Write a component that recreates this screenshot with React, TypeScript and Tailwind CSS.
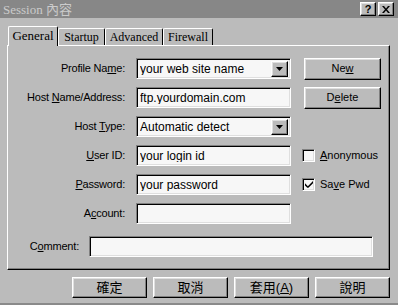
import React from "react";

const raised =
  "border border-t-white border-l-white border-r-black border-b-black shadow-[inset_-1px_-1px_0_#808080,inset_1px_1px_0_#dfdfdf] bg-[#bbbbbb]";
const sunken =
  "border border-t-[#808080] border-l-[#808080] border-r-white border-b-white shadow-[inset_1px_1px_0_#000,inset_-1px_-1px_0_#dfdfdf] bg-[#f7f7f7]";

function Field({ value, select }: { value?: string; select?: boolean }) {
  return (
    <div className={`${sunken} w-[155px] h-[21px] flex items-center pl-[3px] pr-[2px]`}>
      <span className="flex-1 text-[12px] text-black leading-none whitespace-nowrap overflow-hidden">{value}</span>
      {select && (
        <div className={`${raised} w-[17px] h-[16px] flex items-center justify-center`}>
          <svg width="7" height="4" viewBox="0 0 7 4">
            <path d="M0 0h7L3.5 4z" fill="#000" />
          </svg>
        </div>
      )}
    </div>
  );
}

function Row({ label, children, right }: { label: React.ReactNode; children: React.ReactNode; right?: React.ReactNode }) {
  return (
    <div className="flex items-center h-[21px]">
      <div className="w-[117px] text-right text-[11px] tracking-[-0.2px] text-black whitespace-nowrap">{label}</div>
      <div className="ml-[11px]">{children}</div>
      {right}
    </div>
  );
}

function Check({ checked, children }: { checked?: boolean; children: React.ReactNode }) {
  return (
    <div className="ml-[11px] flex items-center gap-[5px] text-[11px] text-black">
      <div className={`${sunken} w-[13px] h-[13px] flex items-center justify-center`}>
        {checked && (
          <svg width="8" height="8" viewBox="0 0 7 7">
            <path d="M0 2v2l2 2h1l4-4V0L2.5 4.5z" fill="#000" />
          </svg>
        )}
      </div>
      <span>{children}</span>
    </div>
  );
}

export default function App() {
  return (
    <div className="w-[398px] h-[305px] bg-[#bbbbbb] flex flex-col overflow-hidden border-b-2 border-b-[#8a8a8a] font-['Liberation_Sans','Noto_Sans_CJK_TC',sans-serif]">
      <div className="h-[18px] bg-[#878787] flex items-center pl-[3px] pr-[4px]">
        <span className="text-[13px] text-[#cbcbcb] font-['Liberation_Serif','Noto_Sans_CJK_TC',serif] leading-none">
          Session 內容
        </span>
        <div className="ml-auto flex gap-[2px]">
          <div className={`${raised} w-[16px] h-[14px] flex items-center justify-center text-[11px] font-bold leading-none`}>?</div>
          <div className={`${raised} w-[16px] h-[14px] flex items-center justify-center`}>
            <svg width="8" height="7" viewBox="0 0 8 7">
              <path d="M0 0h2l2 2.5L6 0h2L5 3.5 8 7H6L4 4.5 2 7H0l3-3.5z" fill="#000" />
            </svg>
          </div>
        </div>
      </div>

      <div className="pl-[7px] pt-[8px]">
        <div className="flex items-end h-[19px] pl-[1px] font-['Liberation_Serif',serif] text-[12px] text-black">
          <div className="relative z-10 -mb-[1px] w-[50px] h-[20px] bg-[#bbbbbb] border-l border-t border-r border-l-white border-t-white border-r-black rounded-t-[2px] flex items-center justify-center pb-[2px] text-[13px]">
            General
          </div>
          <div className="w-[47px] h-[17px] border-l border-t border-r border-l-white border-t-white border-r-black rounded-t-[2px] flex items-center justify-center">
            Startup
          </div>
          <div className="w-[58px] h-[17px] border-l border-t border-r border-l-white border-t-white border-r-black rounded-t-[2px] flex items-center justify-center">
            Advanced
          </div>
          <div className="w-[50px] h-[17px] border-l border-t border-r border-l-white border-t-white border-r-black rounded-t-[2px] flex items-center justify-center">
            Firewall
          </div>
        </div>

        <div className="w-[383px] h-[225px] border border-t-white border-l-white border-r-black border-b-black shadow-[inset_-1px_-1px_0_#808080] pt-[12px] flex flex-col">
          <div className="flex flex-col gap-[8px]">
            <Row
              label={<>Profile Na<u>m</u>e:</>}
              right={
                <div className={`${raised} ml-[13px] w-[77px] h-[22px] flex items-center justify-center text-[11px]`}>
                  Ne<u>w</u>
                </div>
              }
            >
              <Field value="your web site name" select />
            </Row>
            <Row
              label={<>Host <u>N</u>ame/Address:</>}
              right={
                <div className={`${raised} ml-[13px] w-[77px] h-[22px] flex items-center justify-center text-[11px]`}>
                  D<u>e</u>lete
                </div>
              }
            >
              <Field value="ftp.yourdomain.com" />
            </Row>
            <Row label={<>Host <u>T</u>ype:</>}>
              <Field value="Automatic detect" select />
            </Row>
            <Row label={<><u>U</u>ser ID:</>} right={<Check><u>A</u>nonymous</Check>}>
              <Field value="your login id" />
            </Row>
            <Row label={<><u>P</u>assword:</>} right={<Check checked>Sa<u>v</u>e Pwd</Check>}>
              <Field value="your password" />
            </Row>
            <Row label={<>A<u>c</u>count:</>}>
              <Field />
            </Row>
          </div>
          <div className="flex items-center h-[21px] mt-[12px]">
            <div className="w-[71px] text-right text-[11px] tracking-[-0.2px] text-black">
              C<u>o</u>mment:
            </div>
            <div className={`${sunken} ml-[10px] w-[284px] h-[21px]`} />
          </div>
        </div>
      </div>

      <div className="flex gap-[6px] pl-[72px] pt-[7px] text-[13px] text-black">
        <div className={`${raised} w-[75px] h-[21px] flex items-center justify-center`}>確定</div>
        <div className={`${raised} w-[75px] h-[21px] flex items-center justify-center`}>取消</div>
        <div className={`${raised} w-[75px] h-[21px] flex items-center justify-center`}>
          套用(<u>A</u>)
        </div>
        <div className={`${raised} w-[75px] h-[21px] flex items-center justify-center`}>說明</div>
      </div>
    </div>
  );
}
